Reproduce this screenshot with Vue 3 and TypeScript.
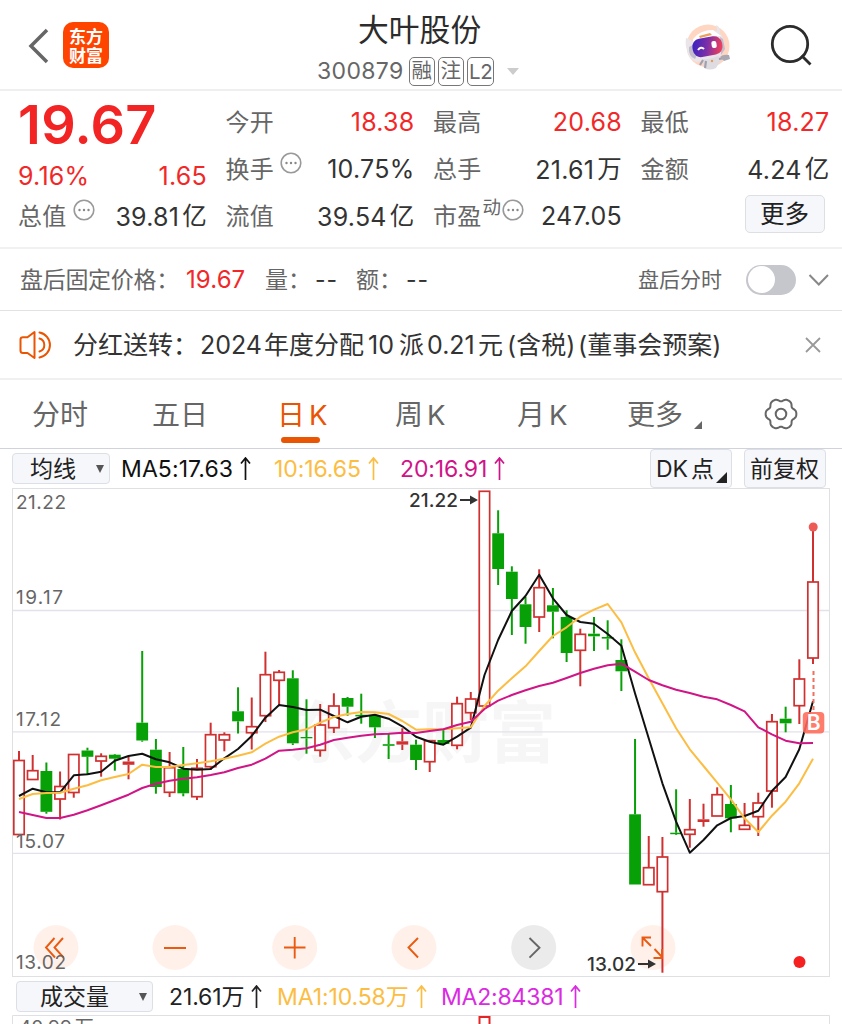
<script setup lang="ts">
type Candle = [kind: 'r' | 'g' | 'f', high: number, top: number, bottom: number, low: number]

const candles: Candle[] = [
  ['r', 751, 760.5, 834.5, 835], ['r', 755, 770.7, 779.5, 780], ['g', 762.5, 771, 811.8, 813.7],
  ['r', 771.5, 786.5, 799, 819.5], ['r', 754, 754.5, 792.5, 797.7], ['g', 747.7, 750.5, 756.8, 775],
  ['r', 753.3, 756.3, 761, 776.7], ['g', 754, 754.7, 758.7, 770.7], ['f', 756.5, 761.5, 764.8, 779.3],
  ['g', 651, 722.7, 740.5, 741.7], ['g', 739, 749.7, 787, 793.7], ['r', 752, 767.7, 792.3, 797],
  ['g', 747, 769, 793.3, 796.3], ['r', 759, 768.3, 796.7, 800], ['r', 722.7, 734.7, 766.7, 770],
  ['r', 732.3, 734.7, 740, 751.3], ['g', 687.3, 711.3, 721.3, 733.5], ['r', 697.5, 726.7, 732.7, 749.5],
  ['r', 651.7, 674.7, 715.7, 722], ['r', 670, 672.3, 680.3, 705], ['g', 670.3, 678.3, 743.3, 745],
  ['g', 699.3, 737, 738.3, 753.7], ['r', 704, 725, 750.3, 756.7], ['r', 693.3, 706, 727.7, 733],
  ['g', 697, 698, 706.7, 715.7], ['g', 693.7, 714.8, 716.4, 723.7], ['g', 714, 715.7, 727.3, 738],
  ['g', 734, 744.2, 745.8, 759], ['f', 728.3, 741.3, 744.6, 750], ['g', 739.7, 744.7, 760, 770],
  ['r', 740, 740.7, 761.7, 772], ['g', 729.3, 740, 744, 745], ['r', 696.7, 703.7, 745.3, 749.3],
  ['r', 692, 699, 712.7, 720], ['r', 491, 491.3, 706, 706], ['g', 510.3, 533.3, 569, 585],
  ['g', 566.3, 571.7, 599, 635], ['g', 597, 604.3, 627, 643.7], ['r', 569.3, 587.7, 617, 632],
  ['g', 588, 605.3, 611.7, 638.3], ['g', 610.3, 617, 653, 662], ['r', 628.7, 634.3, 650.3, 686.3],
  ['g', 617, 633.7, 636.3, 651], ['g', 620.3, 637, 638.6, 649.7], ['g', 639.3, 660, 671.3, 691],
  ['g', 739, 814.3, 884.5, 884.5], ['r', 836, 867.7, 884.7, 885], ['r', 837, 857, 891.7, 972.7],
  ['g', 789.3, 832.7, 834.2, 835], ['r', 799, 829.7, 834.3, 847.7], ['f', 803.7, 819.3, 822, 826.7],
  ['r', 787.3, 794.7, 816, 816], ['g', 785, 804, 818.3, 832.3], ['r', 803, 825.3, 829.3, 829.5],
  ['r', 792.7, 803, 816.7, 836], ['r', 714, 721.7, 791, 807.7], ['g', 706.7, 718.7, 723.3, 732.3],
  ['r', 659.3, 679, 705.7, 724], ['r', 527, 582, 658, 664],
]

const ma5 = [796, 788.7, 792.3, 792.3, 775.3, 774.3, 771.7, 760.7, 756, 753.7, 759.3, 762.3, 768.7, 769.7, 769, 758.3, 749, 736, 717.7, 705, 707, 710, 709.7, 716, 722.3, 716.7, 714.7, 718.7, 726.3, 736.7, 741.7, 744.7, 736.7, 727.7, 675, 640, 611, 596, 574.7, 598.3, 615, 622, 623.7, 634, 645.7, 693.3, 738.3, 783.3, 821.7, 852.7, 840, 825.3, 818, 816, 810.7, 791, 777, 749.3, 701.3]
const ma10 = [799, 794, 793, 792.7, 788.7, 785.3, 780.3, 777, 774, 764.7, 767, 767, 765, 763.3, 761.3, 758.7, 755.7, 752.3, 743.7, 736.7, 732.3, 729.3, 722.7, 717, 714, 712, 712.3, 714, 721, 729.7, 729.3, 729.3, 728.3, 727.3, 706, 690.7, 678.3, 666.3, 651, 636, 627.3, 616.7, 609.7, 604, 622.3, 652.3, 678.3, 703.3, 728.3, 749.3, 766, 782.7, 799.3, 818.3, 832, 815.7, 801.7, 783.3, 758.7]
const ma20 = [812, 815, 818, 818, 814.7, 810.3, 805.3, 800, 794.7, 788, 783.7, 780.7, 778.7, 777.3, 775, 772.3, 768, 764.7, 758.7, 750.7, 749.7, 748.3, 744.7, 740, 737.7, 735.7, 734.3, 733.7, 732.7, 733, 731, 729.3, 725, 721.7, 709, 700.7, 695, 690.3, 686, 682.7, 678, 673, 668.7, 665.3, 663.7, 671.7, 680, 685.3, 689.7, 693, 696.7, 699.3, 705, 711.3, 727.3, 734.3, 740.7, 743.3, 743]

const cx = (i: number): number => 19 + i * 13.69
const line = (ys: number[]): string => ys.map((y, i) => `${cx(i).toFixed(1)},${y}`).join(' ')
const grid = [610.5, 731.8, 853.4]
const tools = [56, 175, 294.7, 414, 533.7, 653]

// Six rounded lobes with shallow hollows between them
const gear = Array.from({ length: 120 }, (_, k) => {
  const a = (k * Math.PI) / 60
  const r = 14.3 + 1.35 * Math.cos(6 * a) - 0.3 * Math.cos(12 * a)
  return `${(17 + r * Math.cos(a)).toFixed(2)},${(16 + r * Math.sin(a)).toFixed(2)}`
}).join(' ')
</script>

<template>
  <main class="page">
    <header class="top">
      <svg class="back" width="22" height="36" viewBox="0 0 22 36"><path d="M19 2 3 18l16 16" /></svg>
      <div class="logo">东方<br>财富</div>
      <div class="title">
        <h1>大叶股份</h1>
        <div class="code">
          <span class="num">300879</span><i>融</i><i>注</i><i class="l2">L2</i><b class="drop"></b>
        </div>
      </div>
      <svg class="robot" width="48" height="48" viewBox="0 0 48 48">
        <defs>
          <linearGradient id="visor" x1="0" x2="1" y1="0.3" y2="0.5">
            <stop offset="0" stop-color="#3a22c0" /><stop offset="0.5" stop-color="#7a2fa8" /><stop offset="1" stop-color="#f0405a" />
          </linearGradient>
        </defs>
        <circle cx="24" cy="23" r="21.5" fill="#ffd6c2" />
        <path d="M2 15l3 1 3 2 6-6q5-4 12-5 4 0 7 1 0-4-1-6 5 2 4 8 5 6 4 15l-4 10-24 4q-9-4-9-13-2-3-1-11z" fill="#e9e5e9" />
        <path d="M9 16q7-9 20-9l8 6q-14-1-28 6z" fill="#fff" />
        <path d="m15 13 11-3 2 2-12 3z" fill="#eba25e" />
        <path d="M5 24q-1 9 6 12l2-4-4-10zM36 14l3 2 2 10-4 6z" fill="#c2bdca" />
        <rect x="8.500" y="14.500" width="30" height="18.500" rx="8" fill="url(#visor)" transform="rotate(-10 23 24)" />
        <path d="M14 27q3-4 6-1" fill="none" stroke="#fff" stroke-width="2" />
        <rect x="27.500" y="18" width="5" height="7" rx="2" fill="#fff" transform="rotate(-8 30 21)" />
        <path d="M18 36q7 1 16-3l4 3-3 4-3 5q-6 3-12 0z" fill="#dedbe1" />
        <path d="M19 37l-3 5M22 38l-1 7M35 36l6-1" fill="none" stroke="#a5a1ac" stroke-width="2.200" />
        <path d="M36 34q3-3 9-2l1 4-6 2z" fill="#aaa8b2" /><circle cx="28" cy="38" r="1.200" fill="#e49e52" />
      </svg>
      <svg class="search" width="44" height="44" viewBox="0 0 44 44"><circle cx="20" cy="20" r="17.700" /><path d="m31.500 31.500 9 9" /></svg>
    </header>

    <section class="quote">
      <div class="col first">
        <strong class="price">19.67</strong>
        <div class="cell delta"><span>9.16%</span><span>1.65</span></div>
        <div class="cell"><label>总值<svg class="info" width="22" height="22" viewBox="0 0 22 22"><circle class="ring" cx="11" cy="11" r="9.800" /><circle cx="6.500" cy="11" r="1.200" /><circle cx="11" cy="11" r="1.200" /><circle cx="15.500" cy="11" r="1.200" /></svg></label><span>39.81<em>亿</em></span></div>
      </div>
      <div class="col">
        <div class="cell"><label>今开</label><span class="red">18.38</span></div>
        <div class="cell"><label>换手<svg class="info" width="22" height="22" viewBox="0 0 22 22"><circle class="ring" cx="11" cy="11" r="9.800" /><circle cx="6.500" cy="11" r="1.200" /><circle cx="11" cy="11" r="1.200" /><circle cx="15.500" cy="11" r="1.200" /></svg></label><span>10.75%</span></div>
        <div class="cell"><label>流值</label><span>39.54<em>亿</em></span></div>
      </div>
      <div class="col">
        <div class="cell"><label>最高</label><span class="red">20.68</span></div>
        <div class="cell"><label>总手</label><span>21.61<em>万</em></span></div>
        <div class="cell"><label>市盈<sup>动</sup><svg class="info tight" width="22" height="22" viewBox="0 0 22 22"><circle class="ring" cx="11" cy="11" r="9.800" /><circle cx="6.500" cy="11" r="1.200" /><circle cx="11" cy="11" r="1.200" /><circle cx="15.500" cy="11" r="1.200" /></svg></label><span>247.05</span></div>
      </div>
      <div class="col">
        <div class="cell"><label>最低</label><span class="red">18.27</span></div>
        <div class="cell"><label>金额</label><span>4.24<em>亿</em></span></div>
        <div class="cell end"><button class="more">更多</button></div>
      </div>
    </section>

    <section class="after">
      <span class="han lead">盘后固定价格：</span><span class="red num">19.67</span><span class="han">量：</span><span class="dash">--</span><span class="han">额：</span><span class="dash">--</span>
      <span class="han small">盘后分时</span><b class="switch"></b>
      <svg class="chev" width="22" height="14" viewBox="0 0 22 14"><path d="m1.500 2 9.300 9.500L20 2" /></svg>
    </section>

    <section class="notice">
      <svg class="horn" width="34" height="30" viewBox="0 0 34 30"><path d="M15.500 2v26L8.500 23H4Q1.500 23 1.500 20.500v-11Q1.500 7.300 4 7.300h4.500zM20.500 8.500a6.800 6.800 0 0 1 0 13M20.500 2.500a12.700 12.700 0 0 1 0 25" /></svg>
      <span class="han">分红送转：</span><span class="num">2024</span><span class="han">年度分配</span><span class="num">10</span><span class="han">派</span><span class="num">0.21</span><span class="han">元</span><span class="han"><u>(</u>含税<u>)</u></span><span class="han"><u>(</u>董事会预案<u>)</u></span>
      <svg class="close" width="18" height="18" viewBox="0 0 18 18"><path d="m2 2 14 14M16 2 2 16" /></svg>
    </section>

    <nav class="tabs">
      <span>分时</span><span>五日</span><span class="on">日<u>K</u></span><span>周<u>K</u></span><span>月<u>K</u></span><span class="with-corner">更多<b class="corner"></b></span>
      <svg class="gear" width="34" height="32" viewBox="0 0 34 32"><polygon :points="gear" /><circle cx="17" cy="16" r="5.300" /></svg>
    </nav>

    <section class="indicators">
      <span class="select"><span class="han">均线</span><b class="tri"></b></span>
      <span class="ma">MA5:17.63<svg class="up" width="11" height="23" viewBox="0 0 11 23"><path d="M5.500 1v22M1 6.500 5.500 1 10 6.500" /></svg></span>
      <span class="ma yellow">10:16.65<svg class="up" width="11" height="23" viewBox="0 0 11 23"><path d="M5.500 1v22M1 6.500 5.500 1 10 6.500" /></svg></span>
      <span class="ma pink">20:16.91<svg class="up" width="11" height="23" viewBox="0 0 11 23"><path d="M5.500 1v22M1 6.500 5.500 1 10 6.500" /></svg></span>
      <span class="btn dk"><u>DK</u><span class="han">点</span><b class="corner dark"></b></span>
      <span class="btn"><span class="han">前复权</span></span>
    </section>

    <svg class="chart" width="842" height="490" viewBox="0 488 842 490">
      <text class="mark" x="288" y="757">东方财富</text>
      <rect class="frame" x="12.500" y="488.500" width="817" height="488" />
      <path v-for="y in grid" :key="y" class="grid" :d="`M13 ${y}H829`" />
      <circle v-for="(x, i) in tools" :key="x" :cx="x" cy="947.500" r="22.500" :fill="i === 4 ? '#ebebeb' : '#fff1ea'" />
      <g v-for="([kind, high, top, bottom, low], i) in candles" :key="i" :class="['candle', kind]">
        <path v-if="high < top" :d="`M${cx(i)} ${high}V${top}`" />
        <path v-if="low > bottom" :d="`M${cx(i)} ${bottom}V${low}`" />
        <rect v-if="kind === 'r'" :x="cx(i) - 5.2" :y="top" width="10.400" :height="bottom - top" />
        <rect v-else :x="cx(i) - 5.900" :y="top" width="11.800" :height="bottom - top" />
      </g>
      <polyline class="ma5" :points="line(ma5)" />
      <polyline class="ma10" :points="line(ma10)" />
      <polyline class="ma20" :points="line(ma20)" />
      <circle cx="813.200" cy="527" r="4.500" fill="#ee5a54" />
      <path class="signal" d="M813.500 671v41" />
      <rect x="802.800" y="712" width="21.500" height="21.500" rx="4" fill="#ff6a58" opacity=".88" />
      <text class="buy" x="813.700" y="730">B</text>
      <g class="icons">
        <path d="M54.500 938 46 947.500l9 10M63 938l-8.500 9.500 9 10M164 948h22M284 947.500h21.500M294.700 937v21.500M418 938l-9.500 9.500L418 957.500" />
        <path class="grey" d="m529.500 938 10 9.800-10 9.800" />
        <path d="M651 937.500h-8.500v9M643 938l8 8M653.500 958h8.500v-9M654.500 949l7.500 8" />
      </g>
      <g class="axis">
        <text x="16" y="509" textLength="50">21.22</text>
        <text x="16" y="603.500" textLength="47">19.17</text>
        <text x="16" y="725.500" textLength="45">17.12</text>
        <text x="16" y="847.500" textLength="49">15.07</text>
        <text x="16" y="969" textLength="50">13.02</text>
      </g>
      <g class="extreme">
        <text x="409" y="507" textLength="49">21.22</text>
        <text x="587" y="971" textLength="49">13.02</text>
        <path d="M460 500h14M638 964h14" />
        <path class="head" d="m470 495.500 8 4.500-8 4.500zM648 959.500l8 4.500-8 4.500z" />
      </g>
      <circle cx="799.500" cy="962" r="6" fill="#f52020" />
    </svg>

    <section class="volume">
      <span class="select wide"><span class="han">成交量</span><b class="tri"></b></span>
      <span class="ma dark">21.61<em>万</em><svg class="up" width="11" height="23" viewBox="0 0 11 23"><path d="M5.500 1v22M1 6.500 5.500 1 10 6.500" /></svg></span>
      <span class="ma yellow">MA1:10.58<em>万</em><svg class="up" width="11" height="23" viewBox="0 0 11 23"><path d="M5.500 1v22M1 6.500 5.500 1 10 6.500" /></svg></span>
      <span class="ma violet">MA2:84381<svg class="up" width="11" height="23" viewBox="0 0 11 23"><path d="M5.500 1v22M1 6.500 5.500 1 10 6.500" /></svg></span>
    </section>
    <svg class="volchart" width="842" height="9" viewBox="0 1015 842 9">
      <path d="M12.500 1024v-8.500h817v8.500" class="frame" />
      <text x="19" y="1034" class="vol">40.99<tspan dx="3">万</tspan></text>
      <rect x="479.500" y="1017" width="10" height="20" fill="#fff" stroke="#e52525" stroke-width="2" />
    </svg>
  </main>
</template>

<style>
html, body { background: #fff; overflow: hidden; }
</style>

<style scoped>
* { box-sizing: border-box; }
.page { width: 842px; height: 1024px; overflow: hidden; background: #fff; color: #333; font-family: Inter, "Noto Sans CJK SC", sans-serif; font-size: 24px; white-space: nowrap; display: flex; flex-direction: column; }
i, em { font-style: normal; }
u { text-decoration: none; }
svg { flex: none; }
.han { padding-bottom: 3px; }
.red { color: #f22828; }
.top { height: 91px; border-bottom: 2px solid #efefef; display: grid; grid-template-columns: 63px 46px 1fr 48px 44px; flex: none; }
.back { margin: 28px 0 0 28px; fill: none; stroke: #666; stroke-width: 3.500; }
.logo { width: 46px; height: 46px; margin-top: 22px; padding-top: 4px; border-radius: 10px; background: #ff4400; color: #fff; font: 700 17px/19px "Noto Sans CJK SC", sans-serif; text-align: center; }
.title { display: flex; flex-direction: column; width: 230px; margin-left: 208px; }
h1 { margin: 8px 0 0 41px; font-weight: 400; font-size: 30.800px; line-height: 44px; color: #2c2c2c; }
.code { display: flex; align-items: center; height: 32px; margin-top: 3px; gap: 3.500px; color: #666; font-size: 22px; }
.code .num { letter-spacing: .35px; font-size: 23px; margin-right: 2px; }
.code i { width: 25.500px; height: 29px; border: 1px solid #777; border-radius: 5px; font-size: 20.500px; line-height: 25px; text-align: center; }
.code .l2 { width: 27px; letter-spacing: -.5px; line-height: 27px; }
.drop { border: 6.500px solid transparent; border-top: 7px solid #ccc; border-bottom: 0; margin-left: 9px; }
.robot { margin: 23px 0 0 -66px; }
.search { margin: 24px 0 0 -28px; fill: none; stroke: #2c2c2c; stroke-width: 2.800; }

.quote { height: 158px; border-bottom: 2px solid #f1f1f1; padding: 7px 12px 0 18px; display: grid; grid-template-columns: repeat(4, 189px); column-gap: 18.500px; flex: none; }
.col { display: flex; flex-direction: column; }
.cell { height: 47px; display: flex; justify-content: space-between; align-items: center; font-size: 25px; letter-spacing: .25px; }
.price { height: 54px; line-height: 53px; font-size: 54px; font-weight: 600; letter-spacing: .3px; color: #f22424; }
.first .cell { margin-top: -7px; }
.first .delta { margin-top: 0; color: #f22828; }
.cell label { color: #666; font-size: 24px; letter-spacing: .3px; display: flex; align-items: center; padding-bottom: 3px; }
.cell em { font-size: 24.500px; margin-left: 3px; position: relative; top: -1.500px; }
.info { margin: -8px 0 0 6px; fill: #888; }
.info .ring { fill: none; stroke: #999; stroke-width: 1.600; }
.info.tight { margin-left: 1px; }
sup { font-size: 18.500px; line-height: 20px; margin: -14px 0 0 1px; }
.end { justify-content: flex-end; }
.more { width: 80px; height: 38px; margin: -4px 5px 0 0; border: 1px solid #dddfe5; border-radius: 5px; background: #f6f7fa; font: 400 24.500px/34px "Noto Sans CJK SC", sans-serif; color: #222; padding: 0 0 2px; }

.after { height: 62px; border-bottom: 1px solid #e2e2e4; display: grid; grid-template-columns: 166px 79px 50px 41px 50px 232px 108px 57px 22px; padding-left: 20px; align-items: center; flex: none; color: #666; font-size: 23px; }
.after .num { font-size: 24px; letter-spacing: .1px; }
.lead { letter-spacing: -.3px; }
.dash { letter-spacing: 1px; color: #333; }
.small { font-size: 21px; }
.switch { width: 50px; height: 30px; border-radius: 15px; background: #c5c7cd; display: flex; padding: 1.500px; }
.switch::before { content: ""; width: 27px; height: 27px; border-radius: 50%; background: #fff; }
.chev { margin-left: 5px; fill: none; stroke: #888; stroke-width: 2; }

.notice { height: 69px; border-bottom: 2px solid #f0f0f0; display: grid; grid-template-columns: 54px 127px 64px 104px 31px 28px 51px 29px 71px 226px 18px; padding-left: 19px; align-items: center; flex: none; font-size: 25px; }
.horn { fill: none; stroke: #ea5504; stroke-width: 2; stroke-linejoin: round; stroke-linecap: round; }
.close { fill: none; stroke: #999; stroke-width: 1.800; }

.tabs { height: 69px; border-bottom: 1px solid #d0d3dc; display: grid; grid-template-columns: 120px 125px 118px 122px 110px 137px 34px; padding-left: 32px; align-items: center; flex: none; font-size: 28px; color: #666; }
.tabs span { padding-bottom: 3px; }
.tabs u { font-size: 27.500px; margin-left: 4px; }
.tabs .on { color: #ea5504; position: relative; }
.on::after { content: ""; position: absolute; left: 4px; bottom: -7px; width: 39px; height: 6px; border-radius: 3px; background: #ea5504; }
.with-corner { display: flex; align-items: flex-end; }
.corner { width: 0; height: 0; border-left: 8px solid transparent; border-bottom: 8px solid #666; margin: 0 0 4px 11px; }
.gear { fill: none; stroke: #666; stroke-width: 2; stroke-linejoin: round; }

.indicators { height: 39px; padding-left: 12px; display: grid; grid-template-columns: 109px 153px 126px 250px 94px 82px; align-items: center; flex: none; font-size: 23px; color: #111; }
.select { width: 98px; height: 31px; border: 1px solid #dddfe6; border-radius: 4px; background: #f6f7fa; display: flex; align-items: center; justify-content: space-between; padding: 0 5px 0 17px; font-size: 23px; color: #222; }
.tri { border: 4.500px solid transparent; border-top: 8px solid #555; border-bottom: 0; }
.ma { display: flex; align-items: center; letter-spacing: .1px; }
.ma em { padding-bottom: 3px; }
.up { margin-left: 7px; fill: none; stroke: currentColor; stroke-width: 1.700; }
.yellow { color: #fcbd43; letter-spacing: -.1px; }
.pink { color: #cf1488; letter-spacing: -.1px; }
.violet { color: #da2be2; letter-spacing: -.2px; }
.btn { height: 39px; border: 1px solid #dddfe6; border-radius: 4px; background: #f6f7fa; display: flex; align-items: center; padding-left: 5px; font-size: 23px; color: #222; }
.dk { width: 82px; }
.dk u { margin-right: 3px; }
.corner.dark { border-left-width: 11px; border-bottom: 11px solid #222; margin: 18px 0 0 2px; }

.chart, .volchart { display: block; }
.mark { font: 700 67px "Noto Sans CJK SC", sans-serif; fill: #f6f6f6; }
.frame { fill: none; stroke: #dfe0e4; stroke-width: 1; }
.grid { stroke: #e2e2ea; stroke-width: 1.300; }
.candle path { stroke-width: 2; }
.candle.r, .candle.f { stroke: #d03030; fill: none; }
.candle.r rect { stroke-width: 1.700; fill: #fff; }
.candle.f rect { fill: #d03030; stroke: none; }
.candle.g { stroke: #07a007; fill: #07a007; }
.candle.g rect { stroke: none; }
polyline { fill: none; stroke-width: 2; stroke-linejoin: round; }
.ma5 { stroke: #111; }
.ma10 { stroke: #fcbd43; }
.ma20 { stroke: #d01587; }
.signal { stroke: #f07060; stroke-width: 2; stroke-dasharray: 4 3; }
.buy { fill: #fff; font-size: 21px; font-weight: 600; text-anchor: middle; }
.icons { fill: none; stroke: #ea5a10; stroke-width: 1.900; }
.icons .grey { stroke: #666; }
.axis text { font-size: 19px; fill: #666; }
.extreme text { font-size: 19px; font-weight: 500; fill: #333; }
.extreme path { stroke: #333; stroke-width: 2; }
.extreme .head { fill: #333; stroke: none; }
.vol { font-size: 19px; fill: #666; }

.volume { height: 37px; padding-left: 16px; display: grid; grid-template-columns: 153px 108px 164px 140px; align-items: center; flex: none; font-size: 23px; }
.volume .wide { width: 137px; padding-left: 23px; }
.volume .dark { color: #222; letter-spacing: -.1px; }
</style>
